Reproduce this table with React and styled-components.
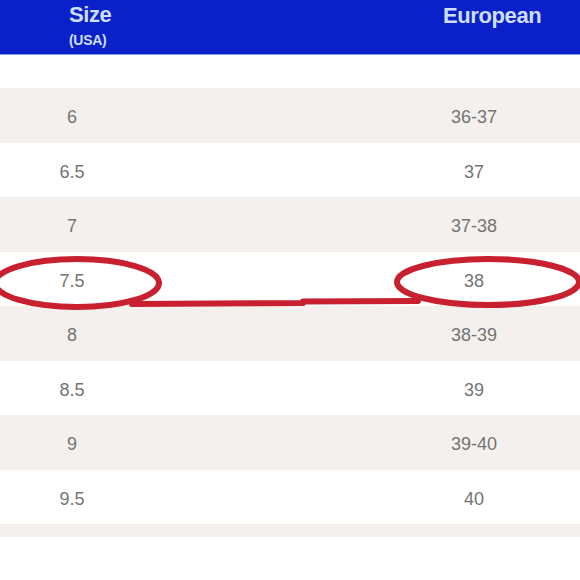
import React from 'react';
import styled, { createGlobalStyle } from 'styled-components';

const Global = createGlobalStyle`
    body {
        margin: 0;
        background: #ffffff;
        font-family: "Liberation Sans", Arial, sans-serif;
    }
`;

const Page = styled.div`
    position: relative;
    width: 580px;
    height: 580px;
    overflow: hidden;
`;

const Header = styled.div`
    display: grid;
    grid-template-columns: 69px 374px 1fr;
    height: 55px;
    background: #0a20c8;
    border-bottom: 1px solid #7f9cf0;
    box-sizing: border-box;
    color: #cddfff;
    font-weight: bold;
`;

const HeadCell = styled.div`
    grid-column: ${p => p.$col};
    display: flex;
    flex-direction: column;
    padding-top: ${p => p.$top}px;
`;

const HeadTitle = styled.span`
    font-size: 22px;
    line-height: 22px;
    letter-spacing: -0.4px;
`;

const HeadSub = styled.span`
    font-size: 14px;
    line-height: 15px;
    margin-top: 7px;
    letter-spacing: -0.3px;
`;

const Spacer = styled.div`
    height: 33px;
`;

const Row = styled.div`
    display: grid;
    grid-template-columns: 144px 255px 150px 1fr;
    align-items: center;
    height: 54.5px;
    padding-top: 5px;
    box-sizing: border-box;
    background: ${p => (p.$shaded ? '#f3f0ee' : '#ffffff')};
    color: #747474;
    font-size: 18px;
`;

const Value = styled.span`
    grid-column: ${p => p.$col};
    text-align: center;
`;

const Strip = styled.div`
    height: 13px;
    background: #f3f0ee;
`;

const Marks = styled.svg`
    position: absolute;
    left: 0;
    top: 0;
    pointer-events: none;
`;

const sizes = [
    ['6', '36-37'],
    ['6.5', '37'],
    ['7', '37-38'],
    ['7.5', '38'],
    ['8', '38-39'],
    ['8.5', '39'],
    ['9', '39-40'],
    ['9.5', '40'],
];

export default () => (
    <Page>
        <Global />
        <Header>
            <HeadCell $col={2} $top={4}>
                <HeadTitle>Size</HeadTitle>
                <HeadSub>(USA)</HeadSub>
            </HeadCell>
            <HeadCell $col={3} $top={5}>
                <HeadTitle>European</HeadTitle>
            </HeadCell>
        </Header>
        <Spacer />
        {sizes.map(([us, eu], i) => (
            <Row key={us} $shaded={i % 2 === 0}>
                <Value $col={1}>{us}</Value>
                <Value $col={3}>{eu}</Value>
            </Row>
        ))}
        <Strip />
        <Marks width="580" height="580" viewBox="0 0 580 580">
            <g fill="none" stroke="#c9202f" strokeWidth="6" strokeLinecap="round">
                <ellipse cx="77" cy="283" rx="82" ry="24" />
                <ellipse cx="488" cy="282" rx="91" ry="23" />
                <path d="M132 304 L303 303 L303 301.5 L418 301" strokeLinejoin="round" />
            </g>
        </Marks>
    </Page>
);
